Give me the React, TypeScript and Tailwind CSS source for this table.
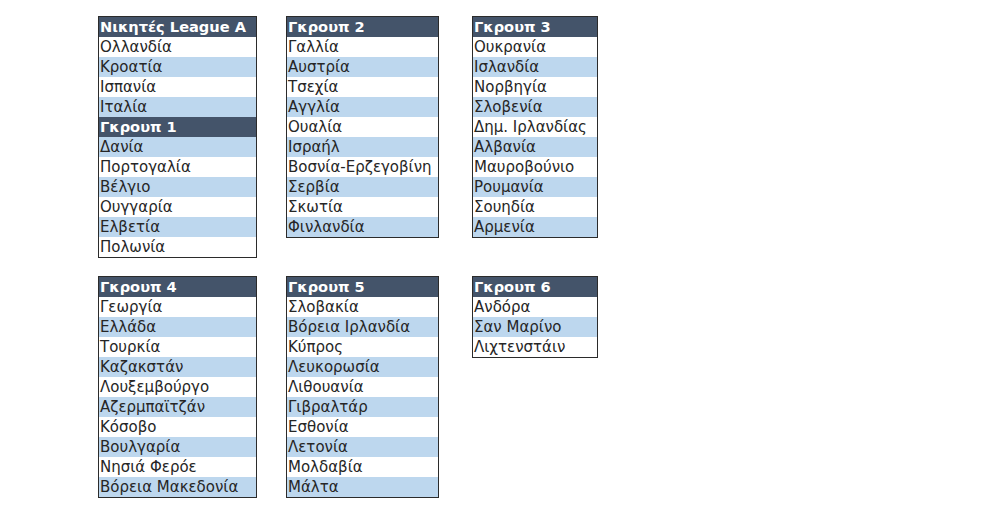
import React, { FC } from "react";

type Row = { t: string; head?: boolean };

const h = (t: string): Row => ({ t, head: true });
const r = (t: string): Row => ({ t });

const Table: FC<{ rows: Row[]; w: string }> = ({ rows, w }) => (
    <div className={`${w} border border-[#2b2b2b] self-start`}>
        {rows.map((row, i) =>
            row.head ? (
                <div key={i} className="h-5 leading-5 px-[1px] bg-[#44546a] text-white text-[14.6px] font-bold whitespace-nowrap">
                    {row.t}
                </div>
            ) : (
                <div
                    key={i}
                    className={`h-5 leading-5 px-[1px] text-[#262626] whitespace-nowrap ${i % 2 === 0 ? "bg-[#bdd7ee]" : "bg-white"}`}
                >
                    {row.t}
                </div>
            )
        )}
    </div>
);

export default function App() {
    return (
        <div className="bg-white w-[990px] h-[506px] pt-4 pl-[98px] text-[15px] font-['DejaVu_Sans',Verdana,sans-serif] flex flex-col gap-[18px]">
            <div className="flex">
                <Table
                    w="w-[159px]"
                    rows={[
                        h("Νικητές League A"),
                        r("Ολλανδία"),
                        r("Κροατία"),
                        r("Ισπανία"),
                        r("Ιταλία"),
                        h("Γκρουπ 1"),
                        r("Δανία"),
                        r("Πορτογαλία"),
                        r("Βέλγιο"),
                        r("Ουγγαρία"),
                        r("Ελβετία"),
                        r("Πολωνία"),
                    ]}
                />
                <div className="w-[29px]" />
                <Table
                    w="w-[153px]"
                    rows={[
                        h("Γκρουπ 2"),
                        r("Γαλλία"),
                        r("Αυστρία"),
                        r("Τσεχία"),
                        r("Αγγλία"),
                        r("Ουαλία"),
                        r("Ισραήλ"),
                        r("Βοσνία-Ερζεγοβίνη"),
                        r("Σερβία"),
                        r("Σκωτία"),
                        r("Φινλανδία"),
                    ]}
                />
                <div className="w-[33px]" />
                <Table
                    w="w-[126px]"
                    rows={[
                        h("Γκρουπ 3"),
                        r("Ουκρανία"),
                        r("Ισλανδία"),
                        r("Νορβηγία"),
                        r("Σλοβενία"),
                        r("Δημ. Ιρλανδίας"),
                        r("Αλβανία"),
                        r("Μαυροβούνιο"),
                        r("Ρουμανία"),
                        r("Σουηδία"),
                        r("Αρμενία"),
                    ]}
                />
            </div>
            <div className="flex">
                <Table
                    w="w-[159px]"
                    rows={[
                        h("Γκρουπ 4"),
                        r("Γεωργία"),
                        r("Ελλάδα"),
                        r("Τουρκία"),
                        r("Καζακστάν"),
                        r("Λουξεμβούργο"),
                        r("Αζερμπαϊτζάν"),
                        r("Κόσοβο"),
                        r("Βουλγαρία"),
                        r("Νησιά Φερόε"),
                        r("Βόρεια Μακεδονία"),
                    ]}
                />
                <div className="w-[29px]" />
                <Table
                    w="w-[153px]"
                    rows={[
                        h("Γκρουπ 5"),
                        r("Σλοβακία"),
                        r("Βόρεια Ιρλανδία"),
                        r("Κύπρος"),
                        r("Λευκορωσία"),
                        r("Λιθουανία"),
                        r("Γιβραλτάρ"),
                        r("Εσθονία"),
                        r("Λετονία"),
                        r("Μολδαβία"),
                        r("Μάλτα"),
                    ]}
                />
                <div className="w-[33px]" />
                <Table
                    w="w-[126px]"
                    rows={[h("Γκρουπ 6"), r("Ανδόρα"), r("Σαν Μαρίνο"), r("Λιχτενστάιν")]}
                />
            </div>
        </div>
    );
}
